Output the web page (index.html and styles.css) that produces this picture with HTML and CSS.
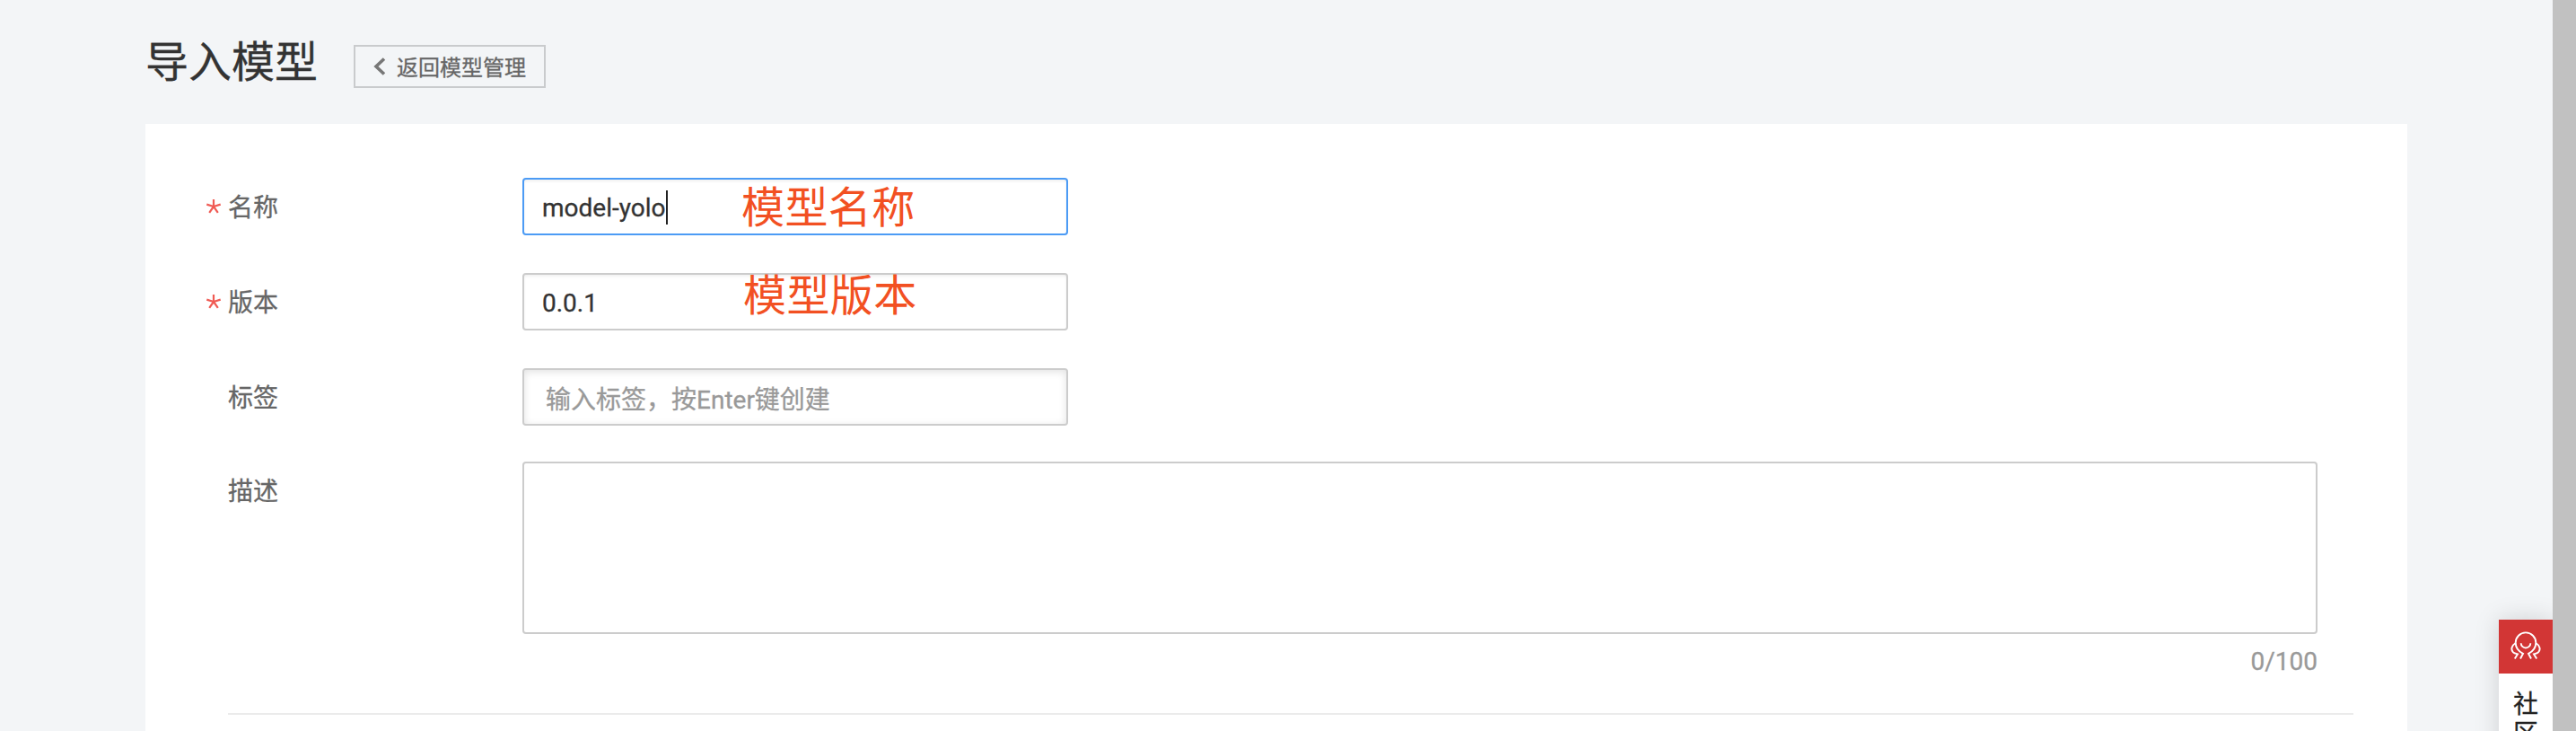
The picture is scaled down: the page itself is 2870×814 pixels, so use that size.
FILE: index.html
```html
<!DOCTYPE html>
<html lang="zh-CN">
<head>
<meta charset="utf-8">
<title>导入模型</title>
<link rel="stylesheet" href="styles.css">
</head>
<body>
<div class="page">
  <main class="content">
    <header class="header">
      <h1 class="title">导入模型</h1>
      <a class="back">
        <svg class="chevron" width="14" height="20" viewBox="0 0 14 20"><path d="M12 1.500 3 10l9 8.500" fill="none" stroke="#777" stroke-width="3.600"/></svg>
        <span>返回模型管理</span>
      </a>
    </header>
    <section class="panel">
      <div class="row">
        <div class="label"><svg class="star" width="18" height="18" viewBox="0 0 18 18"><path d="M9 1v8M9 9 1.300 6.600M9 9l7.700-2.400M9 9l-4.800 6.800M9 9l4.800 6.800" fill="none" stroke="#f05b54" stroke-width="2.200"/></svg>名称</div>
        <div class="input focused">model-yolo<i class="caret"></i><span class="note">模型名称</span></div>
      </div>
      <div class="row">
        <div class="label"><svg class="star" width="18" height="18" viewBox="0 0 18 18"><path d="M9 1v8M9 9 1.300 6.600M9 9l7.700-2.400M9 9l-4.800 6.800M9 9l4.800 6.800" fill="none" stroke="#f05b54" stroke-width="2.200"/></svg>版本</div>
        <div class="input">0.0.1<span class="note note-version">模型版本</span></div>
      </div>
      <div class="row row-tag">
        <div class="label">标签</div>
        <div class="input tags">输入标签，按Enter键创建</div>
      </div>
      <div class="row row-desc">
        <div class="label">描述</div>
        <div class="desc">
          <div class="textarea"></div>
          <div class="counter">0/100</div>
        </div>
      </div>
      <hr class="divider">
    </section>
  </main>
  <aside class="community">
    <div class="community-icon">
      <svg width="34" height="32" viewBox="0 0 34 32" fill="none" stroke="#fff" stroke-width="1.900">
        <path d="M11 30.500 14 24.800C8.500 22 5.700 17.500 5.700 12.700a11.300 11.300 0 0 1 22.600 0C28.300 17.500 25.500 22 20 24.800L23 30.500"/>
        <path d="M5.800 13C1 16 .2 20.500 3 23.300c1.200 1.200 3 1.500 5 2L4.800 30.500"/>
        <path d="M28.200 13C33 16 33.800 20.500 31 23.300c-1.200 1.200-3 1.500-5 2l3.200 5.200"/>
        <path d="M11.700 13.200a5.300 5.300 0 0 0 10.600 0"/>
      </svg>
    </div>
    <div class="community-text">社区</div>
  </aside>
  <div class="scrollbar"></div>
</div>
</body>
</html>
```
FILE: styles.css
```css
* { box-sizing: border-box; }
body {
  margin: 0;
  background: #f3f5f7;
  color: #333;
  font-family: Roboto, "Noto Sans CJK SC", sans-serif;
  -webkit-text-stroke: .3px currentColor;
}
.page {
  position: relative;
  display: flex;
  height: 814px;
  overflow: hidden;
}
.content { flex: 1; padding: 0 162px; }
.header {
  display: flex;
  align-items: flex-start;
  gap: 40px;
  height: 138px;
}
.title {
  margin: 35px 0 0;
  font-size: 48px;
  line-height: 70px;
  font-weight: 400;
}
.back {
  display: flex;
  align-items: center;
  gap: 12px;
  width: 214px;
  height: 48px;
  margin-top: 50px;
  padding-left: 20px;
  border: 2px solid #c9cbcd;
  color: #666;
  font-size: 24px;
  line-height: 44px;
  white-space: nowrap;
}
.back span { padding-top: 3px; }
.panel {
  height: 676px;
  padding: 60px 60px 0 66px;
  background: #fff;
}
.row { display: flex; height: 106px; }
.row-tag { height: 104px; }
.row-desc { height: 280px; }
.label {
  display: flex;
  justify-content: flex-end;
  gap: 7px;
  width: 82px;
  margin-right: 272px;
  height: 64px;
  color: #666;
  font-size: 28px;
  line-height: 68px;
  white-space: nowrap;
}
.star { margin-top: 23px; }
.input {
  position: relative;
  display: flex;
  align-items: center;
  width: 608px;
  height: 64px;
  padding: 3px 20px 0;
  border: 2px solid #ccc;
  border-radius: 4px;
  box-shadow: inset 0 2px 3px rgba(0, 0, 0, .06);
  font-size: 28px;
}
.focused { border-color: #4c9bf5; }
.caret { width: 2px; height: 38px; margin-top: -1px; background: #222; }
.tags {
  padding-top: 2px;
  padding-left: 24px;
  box-shadow: inset 0 2px 8px rgba(0, 0, 0, .12);
  color: #999;
}
.note {
  position: absolute;
  left: 242px;
  top: -3px;
  color: #f25022;
  font-size: 48px;
  line-height: 70px;
  letter-spacing: .4px;
  white-space: nowrap;
  -webkit-text-stroke: 0;
}
.note-version { left: 244px; top: -11px; }
.desc { width: 2000px; }
.textarea {
  height: 192px;
  border: 2px solid #ccc;
  border-radius: 4px;
}
.counter {
  margin-top: 14px;
  color: #999;
  font-size: 28px;
  line-height: 34px;
  text-align: right;
}
.divider {
  height: 2px;
  margin: 0 0 0 26px;
  border: 0;
  background: #ebebeb;
}
.community {
  position: absolute;
  right: 26px;
  top: 690px;
  width: 60px;
  height: 240px;
  background: #fff;
  box-shadow: 0 0 28px rgba(0, 0, 0, .15);
}
.community-icon {
  display: flex;
  justify-content: center;
  height: 60px;
  padding-top: 13px;
  background: #d23635;
}
.community-text {
  width: 28px;
  margin: 18px auto 0;
  color: #222;
  font-size: 28px;
  line-height: 33px;
  word-break: break-all;
}
.scrollbar { position: relative; width: 26px; background: #c1c1c1; }
```
